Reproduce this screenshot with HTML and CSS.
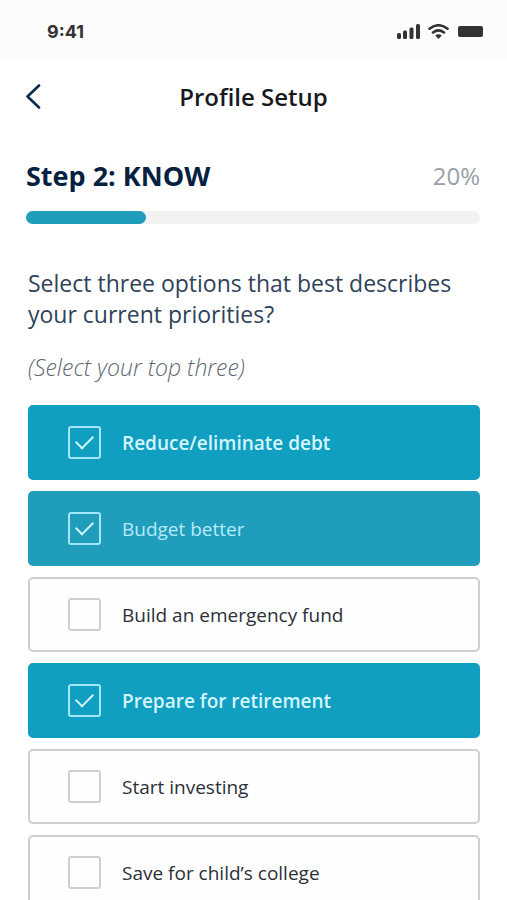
FILE: index.html
```html
<!DOCTYPE html>
<html lang="en">
<head>
<meta charset="utf-8">
<meta name="viewport" content="width=device-width, initial-scale=1">
<title>Profile Setup</title>
<link rel="stylesheet" href="styles.css">
</head>
<body>
<div class="screen">
  <div class="status">
    <span class="time">9:41</span>
    <div class="indicators">
      <svg width="25" height="16" viewBox="0 0 25 16" aria-hidden="true"><rect x="1" y="9" width="4" height="6" rx="1.5"/><rect x="7" y="6.500" width="4" height="8.500" rx="1.5"/><rect x="13.500" y="3.500" width="4" height="11.500" rx="1.5"/><rect x="20" y="0" width="4" height="15" rx="1.5"/></svg>
      <svg class="wifi" width="21" height="16" viewBox="0 0 21 16" aria-hidden="true"><path d="M1.5 4.700Q10.500 -2.200 19.500 4.700M5 8.500Q10.500 4.300 16 8.500"/><path class="dot" d="M7.200 11.500Q10.500 9.200 13.800 11.500L10.500 15Z"/></svg>
      <svg class="battery" width="25" height="16" viewBox="0 0 25 16" aria-hidden="true"><rect x="0" y="2" width="25" height="11" rx="2"/></svg>
    </div>
  </div>
  <header class="topbar">
    <button class="back" type="button" aria-label="Back"><svg width="16" height="26" viewBox="0 0 16 26" aria-hidden="true"><path d="M13 1.500L1.500 12.500L13 23.500"/></svg></button>
    <h1>Profile Setup</h1>
  </header>
  <main>
    <div class="step">
      <h2>Step 2: KNOW</h2>
      <span class="percent">20%</span>
    </div>
    <div class="track"><div class="fill"></div></div>
    <form>
      <p class="question">Select three options that best describes your current priorities?</p>
      <p class="hint">(Select your top three)</p>
      <div class="options">
        <label class="option"><input type="checkbox" checked><span>Reduce/eliminate debt</span></label>
        <label class="option soft"><input type="checkbox" checked><span>Budget better</span></label>
        <label class="option"><input type="checkbox"><span>Build an emergency fund</span></label>
        <label class="option"><input type="checkbox" checked><span>Prepare for retirement</span></label>
        <label class="option"><input type="checkbox"><span>Start investing</span></label>
        <label class="option"><input type="checkbox"><span>Save for child’s college</span></label>
      </div>
    </form>
  </main>
</div>
</body>
</html>
```
FILE: styles.css
```css
* {
  box-sizing: border-box;
}

body {
  margin: 0;
  background: #fff;
  color: #2c3038;
  font-family: "Open Sans", "Noto Sans", sans-serif;
}

h1,
h2,
p {
  margin: 0;
}

.screen {
  height: 100vh;
  overflow-y: auto;
  scrollbar-width: none;
}

.status {
  display: flex;
  align-items: center;
  justify-content: space-between;
  height: 60px;
  padding: 4px 24px 0 47px;
  background: #fcfcfc;
  color: #333;
}

.time {
  font: 700 18px/24px Inter, sans-serif;
}

.indicators {
  display: flex;
  gap: 7px;
  fill: #333;
}

.wifi {
  fill: none;
  stroke: #333;
  stroke-width: 2.6;
  stroke-linecap: round;
}

.wifi .dot {
  fill: #333;
  stroke: none;
}

.battery {
  margin-left: 2px;
}

.topbar {
  display: grid;
  grid-template-columns: 40px 1fr 40px;
  align-items: center;
  height: 74px;
  padding: 0 26px;
}

.back {
  display: flex;
  width: 40px;
  height: 40px;
  padding: 0;
  border: 0;
  background: none;
  align-items: center;
}

.back path {
  fill: none;
  stroke: #0b2c4d;
  stroke-width: 2.6;
  stroke-linecap: round;
  stroke-linejoin: round;
}

h1 {
  color: #17191f;
  font-size: 24px;
  line-height: 32px;
  font-weight: 600;
  text-align: center;
}

main {
  padding: 24px 27px 0 26px;
}

.step {
  display: flex;
  justify-content: space-between;
  align-items: center;
  height: 36px;
}

h2 {
  color: #05213f;
  font-size: 27px;
  line-height: 36px;
  font-weight: 700;
}

.percent {
  color: #98a0a6;
  font-size: 24px;
  line-height: 32px;
}

.track {
  height: 13px;
  margin-top: 17px;
  border-radius: 7px;
  background: #f2f2f2;
}

.fill {
  width: 26.5%;
  height: 100%;
  border-radius: 7px;
  background: #1f9dbb;
}

form {
  padding-left: 2px;
}

.question {
  margin-top: 44px;
  color: #2f435a;
  font-size: 23px;
  line-height: 31px;
}

.hint {
  margin-top: 20px;
  color: #5f6874;
  font-size: 23px;
  line-height: 34px;
  font-style: italic;
  font-weight: 300;
}

.options {
  display: grid;
  gap: 11px;
  margin-top: 21px;
}

.option {
  display: flex;
  align-items: center;
  gap: 21px;
  height: 75px;
  padding: 0 38px;
  border: 2px solid #cfcfd1;
  border-radius: 5px;
  background: #fefefe;
  font-size: 19px;
  line-height: 26px;
}

.option input {
  appearance: none;
  display: grid;
  place-items: center;
  flex: none;
  width: 33px;
  height: 33px;
  margin: 0;
  border: 2px solid #cfcfd1;
  border-radius: 3px;
}

.option:has(input:checked) {
  border-color: #109ec1;
  background: #109ec1;
  color: #d3f6ff;
  font-weight: 600;
}

.option.soft:has(input:checked) {
  border-color: #219dbc;
  background: #219dbc;
  color: #b5ebf9;
  font-weight: 400;
}

.option input:checked {
  border-color: #a2e6f8;
}

.option input:checked::before {
  content: "";
  width: 15px;
  height: 8px;
  margin-bottom: 6px;
  border: solid #d3f6ff;
  border-width: 0 0 2px 2px;
  transform: rotate(-45deg);
}
```
